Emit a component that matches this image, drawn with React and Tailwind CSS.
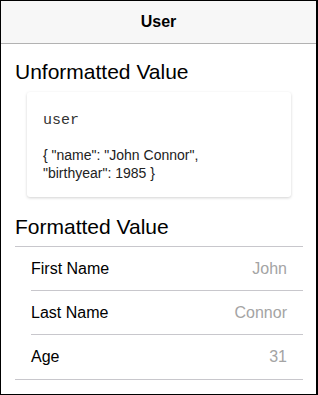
import React from 'react'

const rows = [
  { label: 'First Name', value: 'John' },
  { label: 'Last Name', value: 'Connor' },
  { label: 'Age', value: '31' },
]

const App = () => {
  return (
    <div className="w-[318px] h-[395px] bg-white border-t border-l border-b border-r-2 border-black overflow-hidden font-['Liberation_Sans',Arial,sans-serif] text-black">
      {/* nav bar */}
      <div className="h-[43px] bg-[#f7f7f7] border-b border-[#b2b2b2] flex items-center justify-center">
        <span className="text-[16px] font-bold">User</span>
      </div>

      <h2 className="pt-4 pl-[14px] text-[21px] leading-6">Unformatted Value</h2>

      <div className="mt-2 ml-[26px] mr-[25px] h-[105px] bg-white rounded-[3px] shadow-[0_1px_3px_rgba(0,0,0,0.18)] px-4 pt-[19px]">
        <div className="font-['Liberation_Mono','Courier_New',monospace] text-[15px] leading-5 text-[#333]">user</div>
        <p className="mt-[15px] text-[14px] leading-[18px] text-[#222] whitespace-nowrap">
          {'{ "name": "John Connor",'}
          <br />
          {'"birthyear": 1985 }'}
        </p>
      </div>

      <h2 className="mt-[18px] pl-[14px] text-[21px] leading-6">Formatted Value</h2>

      <div className="mt-[7px] ml-[14px] mr-[13px] border-t border-b border-[#c8c7cc]">
        {rows.map((r, i) => (
          <div key={r.label} className={'ml-4 h-[44px] flex items-center justify-between pr-4 ' + (i < rows.length - 1 ? 'border-b border-[#c8c7cc]' : '')}>
            <span className="text-[16px]">{r.label}</span>
            <span className="text-[16px] text-[#a4a4a4]">{r.value}</span>
          </div>
        ))}
      </div>
    </div>
  )
}

export default App
